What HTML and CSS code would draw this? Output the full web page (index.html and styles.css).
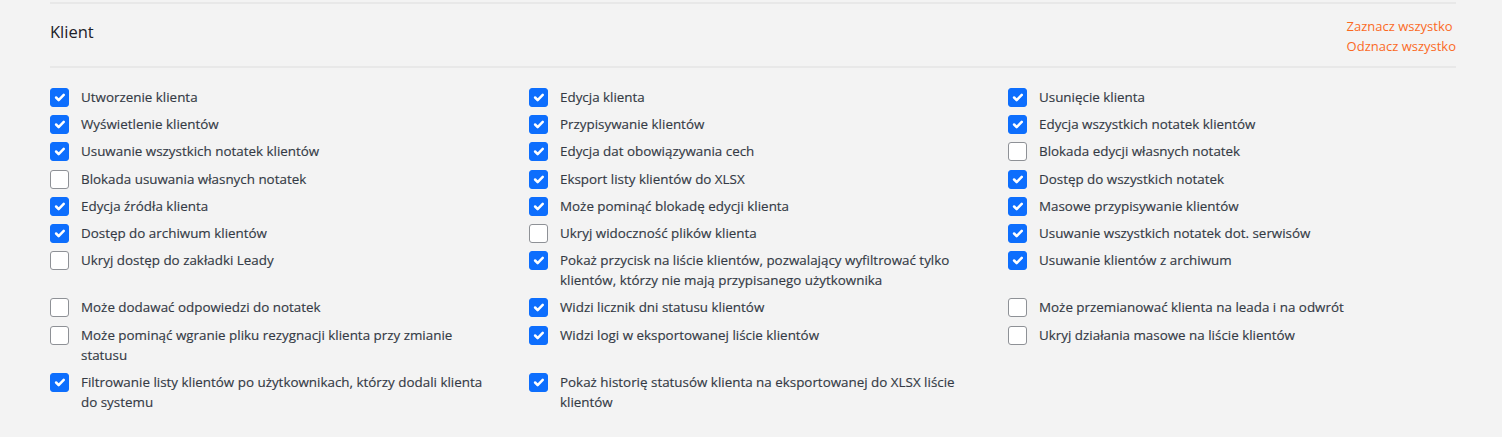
FILE: index.html
```html
<!DOCTYPE html>
<html lang="pl">
<head>
<meta charset="utf-8">
<title>Klient</title>
<link rel="stylesheet" href="styles.css">
</head>
<body>
<section class="panel">
  <header class="panel-head">
    <h2 class="title">Klient</h2>
    <div class="links">
      <a href="#" class="link">Zaznacz wszystko</a>
      <a href="#" class="link">Odznacz wszystko</a>
    </div>
  </header>
  <div class="grid">
    <label class="item"><input type="checkbox" checked><span>Utworzenie klienta</span></label>
    <label class="item"><input type="checkbox" checked><span>Edycja klienta</span></label>
    <label class="item"><input type="checkbox" checked><span>Usunięcie klienta</span></label>

    <label class="item"><input type="checkbox" checked><span>Wyświetlenie klientów</span></label>
    <label class="item"><input type="checkbox" checked><span>Przypisywanie klientów</span></label>
    <label class="item"><input type="checkbox" checked><span>Edycja wszystkich notatek klientów</span></label>

    <label class="item"><input type="checkbox" checked><span>Usuwanie wszystkich notatek klientów</span></label>
    <label class="item"><input type="checkbox" checked><span>Edycja dat obowiązywania cech</span></label>
    <label class="item"><input type="checkbox"><span>Blokada edycji własnych notatek</span></label>

    <label class="item"><input type="checkbox"><span>Blokada usuwania własnych notatek</span></label>
    <label class="item"><input type="checkbox" checked><span>Eksport listy klientów do XLSX</span></label>
    <label class="item"><input type="checkbox" checked><span>Dostęp do wszystkich notatek</span></label>

    <label class="item"><input type="checkbox" checked><span>Edycja źródła klienta</span></label>
    <label class="item"><input type="checkbox" checked><span>Może pominąć blokadę edycji klienta</span></label>
    <label class="item"><input type="checkbox" checked><span>Masowe przypisywanie klientów</span></label>

    <label class="item"><input type="checkbox" checked><span>Dostęp do archiwum klientów</span></label>
    <label class="item"><input type="checkbox"><span>Ukryj widoczność plików klienta</span></label>
    <label class="item"><input type="checkbox" checked><span>Usuwanie wszystkich notatek dot. serwisów</span></label>

    <label class="item"><input type="checkbox"><span>Ukryj dostęp do zakładki Leady</span></label>
    <label class="item"><input type="checkbox" checked><span>Pokaż przycisk na liście klientów, pozwalający wyfiltrować tylko klientów, którzy nie mają przypisanego użytkownika</span></label>
    <label class="item"><input type="checkbox" checked><span>Usuwanie klientów z archiwum</span></label>

    <label class="item"><input type="checkbox"><span>Może dodawać odpowiedzi do notatek</span></label>
    <label class="item"><input type="checkbox" checked><span>Widzi licznik dni statusu klientów</span></label>
    <label class="item"><input type="checkbox"><span>Może przemianować klienta na leada i na odwrót</span></label>

    <label class="item"><input type="checkbox"><span>Może pominąć wgranie pliku rezygnacji klienta przy zmianie statusu</span></label>
    <label class="item"><input type="checkbox" checked><span>Widzi logi w eksportowanej liście klientów</span></label>
    <label class="item"><input type="checkbox"><span>Ukryj działania masowe na liście klientów</span></label>

    <label class="item"><input type="checkbox" checked><span>Filtrowanie listy klientów po użytkownikach, którzy dodali klienta do systemu</span></label>
    <label class="item"><input type="checkbox" checked><span>Pokaż historię statusów klienta na eksportowanej do XLSX liście klientów</span></label>
  </div>
</section>
</body>
</html>
```
FILE: styles.css
```css
* { box-sizing: border-box; }
html, body {
  margin: 0;
  padding: 0;
  background: #f3f3f3;
}
body {
  font-family: "Open Sans", "Noto Sans", sans-serif;
  font-size: 13.4px;
  color: #343a45;
}
.panel {
  margin: 2px 46px 0 50px;
  border-top: 2px solid #e8e8e8;
}
.panel-head {
  display: flex;
  justify-content: space-between;
  align-items: flex-start;
  height: 64px;
  border-bottom: 2px solid #e8e8e8;
}
.title {
  margin: 17px 0 0 0;
  font-size: 16.5px;
  font-weight: 400;
  color: #1d2129;
  line-height: 22px;
}
.links {
  display: flex;
  flex-direction: column;
  align-items: flex-start;
  padding: 12px 0 0 2px;
}
.link {
  color: #fb6a1f;
  text-decoration: none;
  font-size: 13px;
  line-height: 20px;
}
.grid {
  display: grid;
  grid-template-columns: repeat(3, 441px);
  column-gap: 38px;
  row-gap: 7.2px;
  padding-top: 19px;
  align-items: start;
}
.item {
  display: flex;
  align-items: flex-start;
  gap: 12px;
  line-height: 20px;
  cursor: pointer;
}
.item span { max-width: 412px; -webkit-text-stroke: 0.15px #343a45; }
.item input {
  appearance: none;
  -webkit-appearance: none;
  flex: 0 0 19px;
  width: 19px;
  height: 19px;
  margin: 1px 0 0 0;
  border: 1px solid #8e9196;
  border-radius: 3px;
  background: #fff;
}
.item input:checked {
  border-color: #0d6efd;
  background-color: #0d6efd;
  background-image: url("data:image/svg+xml,%3csvg xmlns='http://www.w3.org/2000/svg' viewBox='0 0 20 20'%3e%3cpath fill='none' stroke='%23fff' stroke-linecap='round' stroke-linejoin='round' stroke-width='3' d='M6 10l3 3l6-6'/%3e%3c/svg%3e");
  background-size: 100% 100%;
}
```
